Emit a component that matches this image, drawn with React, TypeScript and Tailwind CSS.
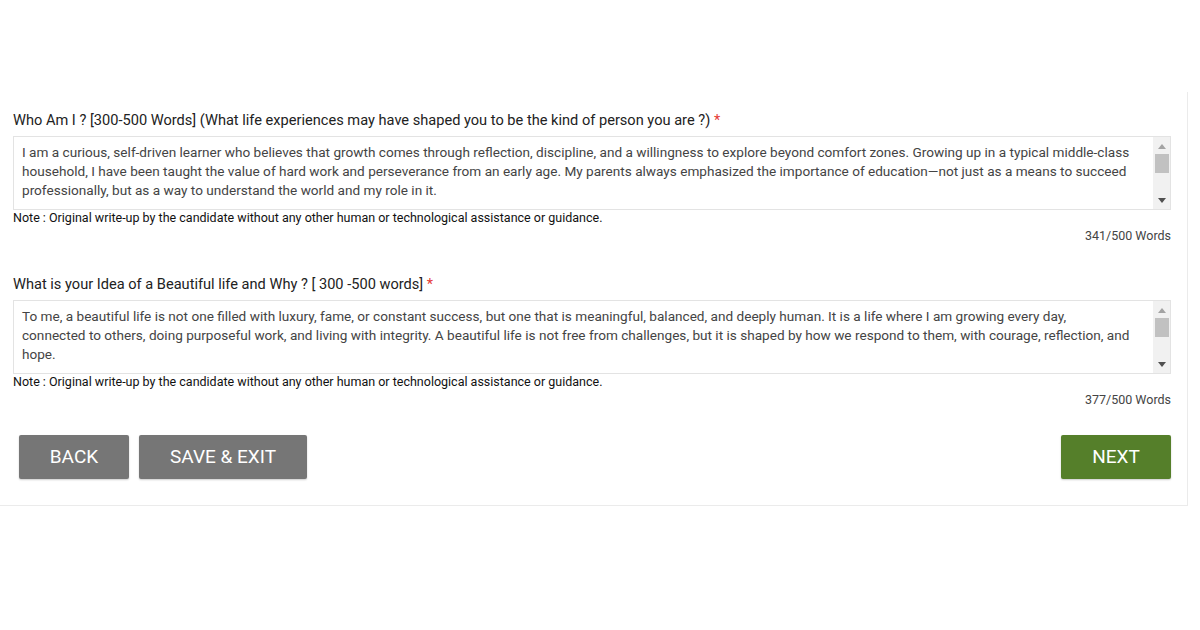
import React from "react";

type Question = {
  id: string;
  label: string;
  text: string;
  count: number;
};

const QUESTIONS: Question[] = [
  {
    id: "who",
    label: "Who Am I ? [300-500 Words] (What life experiences may have shaped you to be the kind of person you are ?)",
    text:
      "I am a curious, self-driven learner who believes that growth comes through reflection, discipline, and a willingness to explore beyond comfort zones. Growing up in a typical middle-class household, I have been taught the value of hard work and perseverance from an early age. My parents always emphasized the importance of education\u2014not just as a means to succeed professionally, but as a way to understand the world and my role in it.",
    count: 341,
  },
  {
    id: "life",
    label: "What is your Idea of a Beautiful life and Why ? [ 300 -500 words]",
    text:
      "To me, a beautiful life is not one filled with luxury, fame, or constant success, but one that is meaningful, balanced, and deeply human. It is a life where I am growing every day, connected to others, doing purposeful work, and living with integrity. A beautiful life is not free from challenges, but it is shaped by how we respond to them, with courage, reflection, and hope.",
    count: 377,
  },
];

/* 擬似スクロールバー（上下の三角＋つまみ） */
function FakeScrollbar() {
  return (
    <div className="flex w-[17px] shrink-0 flex-col items-center bg-[#f1f1f1]">
      <svg width="8" height="5" viewBox="0 0 8 5" className="mt-[7px]" aria-hidden>
        <path d="M0 5L4 0l4 5z" fill="#a3a3a3" />
      </svg>
      <div className="mt-[5px] h-[19px] w-[14px] bg-[#c1c1c1]" />
      <div className="flex-1" />
      <svg width="8" height="5" viewBox="0 0 8 5" className="mb-[6px]" aria-hidden>
        <path d="M0 0h8L4 5z" fill="#505050" />
      </svg>
    </div>
  );
}

function Field({ q }: { q: Question }) {
  return (
    <div>
      <label className="block text-[14.6px] leading-[20px] text-[#222]">
        {q.label} <span className="text-[#e53935]">*</span>
      </label>
      <div className="mt-[6px] flex h-[74px] border border-[#e3e3e3] bg-white">
        <div className="flex-1 pl-[8px] pr-[22px] pt-[6px] text-[13.6px] leading-[19px] text-[#444]">
          {q.text}
        </div>
        <FakeScrollbar />
      </div>
      <p className="text-[12.5px] leading-[16px] text-[#111]">
        Note : Original write-up by the candidate without any other human or technological assistance or guidance.
      </p>
      <p className="mt-[2px] text-right text-[12.5px] leading-[16px] text-[#444]">{q.count}/500 Words</p>
    </div>
  );
}

export default function App() {
  return (
    <div className="h-[630px] w-[1200px] bg-white font-['Roboto','Liberation_Sans',sans-serif]">
      <div className="h-[92px]" />
      <section className="w-[1188px] border-r border-b border-[#ebebeb] pt-[18px] pb-[26px]">
        <div className="flex w-[1171px] flex-col gap-[30px] pl-[13px]">
          {QUESTIONS.map((q) => (
            <Field key={q.id} q={q} />
          ))}
        </div>

        <div className="mt-[27px] flex w-[1171px] items-center pl-[19px]">
          <button
            type="button"
            className="h-[44px] w-[110px] rounded-[2px] bg-[#767676] text-[19px] text-white shadow-[0_1px_2px_rgba(0,0,0,0.2)]"
          >
            BACK
          </button>
          <button
            type="button"
            className="ml-[10px] h-[44px] w-[168px] rounded-[2px] bg-[#767676] text-[19px] text-white shadow-[0_1px_2px_rgba(0,0,0,0.2)]"
          >
            SAVE &amp; EXIT
          </button>
          <div className="flex-1" />
          <button
            type="button"
            className="h-[44px] w-[110px] rounded-[2px] bg-[#557f2a] text-[19px] text-white shadow-[0_1px_2px_rgba(0,0,0,0.2)]"
          >
            NEXT
          </button>
        </div>
      </section>
    </div>
  );
}
